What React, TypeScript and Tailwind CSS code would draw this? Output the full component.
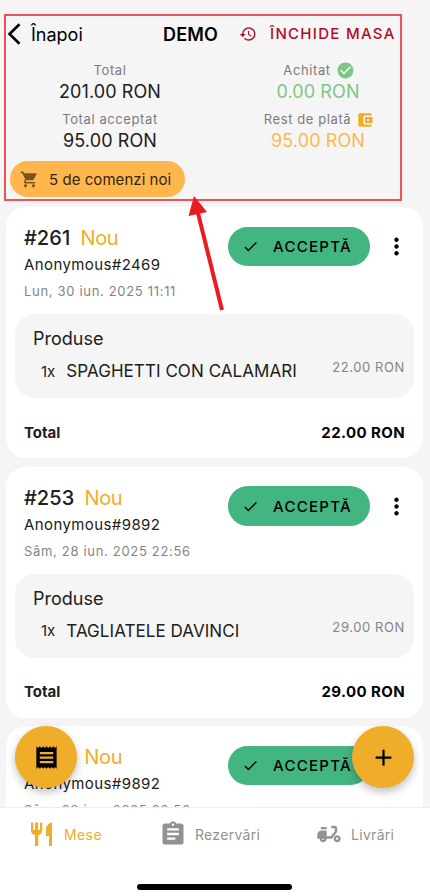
import React from "react";
import {
  MdHistory,
  MdCheckCircle,
  MdAccountBalanceWallet,
  MdShoppingCart,
  MdCheck,
  MdMoreVert,
  MdReceipt,
  MdAdd,
  MdAssignment,
  MdDeliveryDining,
} from "react-icons/md";

type Order = {
  id: string;
  customer: string;
  date: string;
  product?: string;
  price?: string;
};

const orders: Order[] = [
  { id: "#261", customer: "Anonymous#2469", date: "Lun, 30 iun. 2025 11:11", product: "SPAGHETTI CON CALAMARI", price: "22.00 RON" },
  { id: "#253", customer: "Anonymous#9892", date: "Sâm, 28 iun. 2025 22:56", product: "TAGLIATELE DAVINCI", price: "29.00 RON" },
  { id: "#252", customer: "Anonymous#9892", date: "Sâm, 28 iun. 2025 22:56" },
];

function OrderCard({ order }: { order: Order }) {
  return (
    <article className="h-[251px] shrink-0 rounded-[20px] bg-white px-[9px] text-[#202020]">
      <div className="flex h-[107px] justify-between pl-[9px]">
        <div className="pt-[19px]">
          <div className="flex h-6 items-center gap-[10px] text-[20px] leading-6">
            <span className="font-medium tracking-[0.1px]">{order.id}</span>
            <span className="tracking-[-0.3px] text-[#efad29]">Nou</span>
          </div>
          <div className="mt-[5px] text-[15px] leading-5 tracking-[0.4px]">{order.customer}</div>
          <div className="mt-[8px] text-[13px] leading-4 tracking-[0.68px] text-[#858585]">{order.date}</div>
        </div>
        <div className="mr-[4px] mt-[20px] flex h-[39px] items-center">
          <button className="flex h-[39.500px] w-[142px] items-center rounded-full bg-[#43b581] pl-[14px] text-black">
            <MdCheck className="size-[17px]" />
            <span className="ml-[14px] pt-[2px] text-[15px] font-medium tracking-[1.3px]">ACCEPTĂ</span>
          </button>
          <MdMoreVert className="ml-[13px] size-[27px] text-black" />
        </div>
      </div>
      {order.product && (
        <>
          <section className="h-[84px] rounded-[20px] bg-[#f5f5f5] pl-[18px] pr-[9px] pt-[15px]">
            <h3 className="text-[18px] leading-[20px] tracking-[0px]">Produse</h3>
            <div className="mt-[9px] flex h-[28px] items-center pl-[8px]">
              <span className="text-[15px]">1x</span>
              <span className="ml-[11px] text-[17px] tracking-[0.06px]">{order.product}</span>
              <span className="ml-auto pb-[8px] text-[13px] tracking-[0.6px] text-[#858585]">{order.price}</span>
            </div>
          </section>
          <div className="flex h-[60px] items-center justify-between px-[9px] pt-[10px] text-[15px] font-bold">
            <span>Total</span>
            <span className="tracking-[0.4px] text-black">{order.price}</span>
          </div>
        </>
      )}
    </article>
  );
}

function Amount({ label, value, icon, valueClass }: { label: string; value: string; icon?: React.ReactNode; valueClass: string }) {
  return (
    <div className="flex h-[49px] flex-col items-center">
      <div className="flex h-[20px] items-center gap-[5px] pt-px text-[13px] tracking-[0.6px] text-[#7b7b7b]">
        {label}
        {icon}
      </div>
      <div className={`text-[18px] leading-[23px] tracking-[0.1px] ${valueClass}`}>{value}</div>
    </div>
  );
}

export default function App() {
  return (
    <main className="relative flex h-[896px] w-[430px] flex-col overflow-hidden bg-[#f5f5f5] font-['Inter',sans-serif]">
      <header className="ml-[4px] mt-[14px] h-[187px] w-[398px] shrink-0 border-2 border-[#f05254]">
        <div className="flex h-[36px] items-center">
          <svg viewBox="0 0 14 22" className="ml-[1px] h-[22px] w-[14px]" fill="none" stroke="black" strokeWidth="2.6">
            <path d="M12.5 1.2 2.5 11l10 9.8" />
          </svg>
          <span className="ml-[10px] w-[52px] text-[18px] tracking-[0px]">Înapoi</span>
          <span className="ml-[80px] w-[55px] text-[18px] font-semibold tracking-[0.2px]">DEMO</span>
          <MdHistory className="ml-[21px] size-[18px] text-[#b00c2b]" />
          <span className="ml-[13px] whitespace-nowrap text-[15px] font-medium tracking-[1.3px] text-[#b00c2b]">ÎNCHIDE MASA</span>
        </div>
        <div className="flex pt-[8px]">
          <div className="ml-[4px] w-[200px] shrink-0">
            <Amount label="Total" value="201.00 RON" valueClass="text-[#202020]" />
            <Amount label="Total acceptat" value="95.00 RON" valueClass="text-[#202020]" />
          </div>
          <div className="ml-[23px] w-[170px] shrink-0">
            <Amount label="Achitat" value="0.00 RON" valueClass="text-[#7cc883]" icon={<MdCheckCircle className="-mr-[2px] size-[19px] text-[#7cc883]" />} />
            <Amount label="Rest de plată" value="95.00 RON" valueClass="text-[#fdb950]" icon={<MdAccountBalanceWallet className="-mr-[2px] size-[18px] text-[#efad29]" />} />
          </div>
        </div>
        <div className="ml-[4px] mt-[3px] flex h-[36px] w-[175px] items-center rounded-full bg-[#ffb64d] pl-[10px] text-[#332611]">
          <MdShoppingCart className="size-[19px] text-[#775520]" />
          <span className="ml-[10px] whitespace-nowrap pt-[2px] text-[15px] tracking-[0.05px]">5 de comenzi noi</span>
        </div>
      </header>
      <div className="mt-[6px] flex min-h-0 flex-1 flex-col gap-[8.500px] overflow-hidden pl-[6px] pr-[7px]">
        {orders.map((order) => (
          <OrderCard key={order.id} order={order} />
        ))}
      </div>
      <nav className="flex h-[89px] shrink-0 items-start border-t border-[#eeeeee] bg-white pt-[13px] text-[14px] text-[#929292]">
        <div className="ml-[30px] flex h-[26px] w-[129px] items-center text-[#efad29]">
          <svg viewBox="0 0 24 26" className="h-[26px] w-[24px]" fill="currentColor">
            <path d="M1 1.500h2.200V9h1.900V1.500h3V9H10V1.500h2.300V9.500c0 2.600-1.700 4.200-4 4.600V25H5V14.100c-2.300-.4-4-2-4-4.600z" />
            <path d="M22 1.500C18.500 2 16 5 16 8.500V15h3v10h3z" />
          </svg>
          <span className="ml-[10px] pt-px tracking-[0.4px]">Mese</span>
        </div>
        <div className="flex h-[26px] w-[156px] items-center">
          <MdAssignment className="size-[28px]" />
          <span className="ml-[8px] pt-px tracking-[0.3px]">Rezervări</span>
        </div>
        <div className="flex h-[26px] items-center">
          <MdDeliveryDining className="size-[28px]" />
          <span className="ml-[8px] pt-px tracking-[0.3px]">Livrări</span>
        </div>
      </nav>
      <button className="absolute left-[15px] top-[726px] flex size-[62px] items-center justify-center rounded-full bg-[#efad29] text-black shadow-[0_4px_9px_rgba(0,0,0,0.25)]">
        <MdReceipt className="size-[27px]" />
      </button>
      <button className="absolute left-[352px] top-[726px] flex size-[62px] items-center justify-center rounded-full bg-[#efad29] text-black shadow-[0_4px_9px_rgba(0,0,0,0.25)]">
        <MdAdd className="size-[27px]" />
      </button>
      <svg viewBox="0 0 40 120" className="absolute left-[185px] top-[194px] h-[120px] w-[40px]">
        <path d="M37 116 12 15" stroke="#e91c20" strokeWidth="4" />
        <path d="M9 2 3.500 22 22 18z" fill="#e91c20" />
      </svg>
      <div className="absolute left-[137px] top-[884px] h-[6px] w-[155px] rounded-full bg-black" />
    </main>
  );
}
